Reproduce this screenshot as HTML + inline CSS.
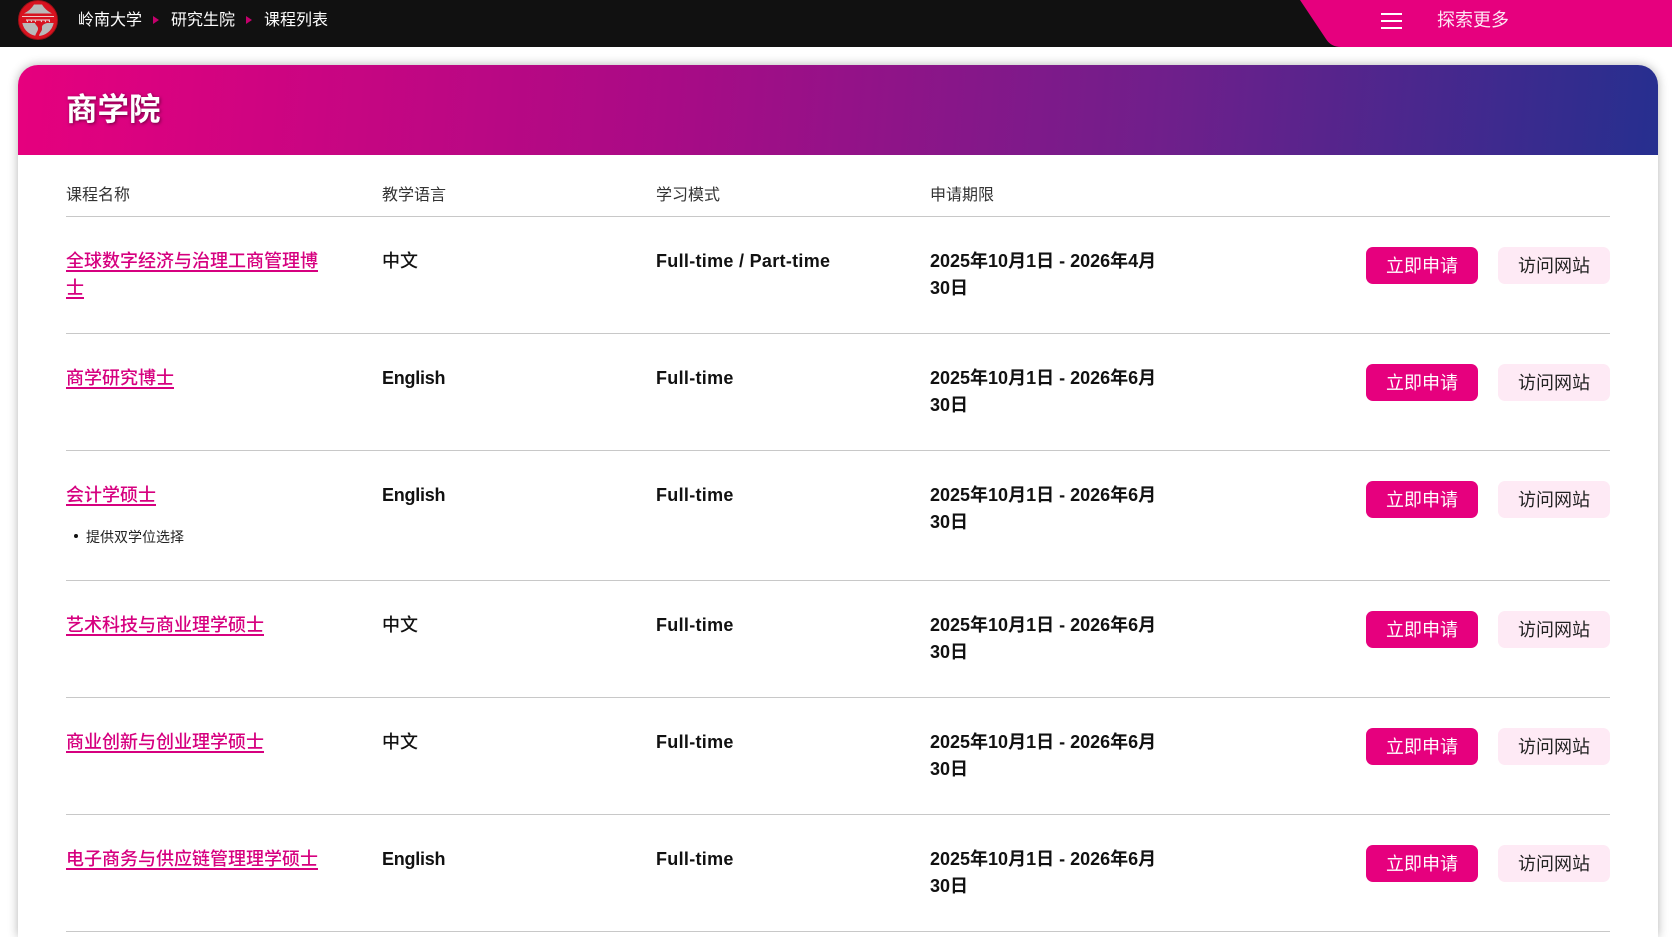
<!DOCTYPE html>
<html lang="zh">
<head>
<meta charset="utf-8">
<title>商学院</title>
<style>
*{box-sizing:border-box}
html,body{margin:0;padding:0;width:1672px;height:937px;overflow:hidden;background:#fff;
font-family:"Liberation Sans","Noto Sans CJK SC",sans-serif;color:#111}
.t{position:absolute;white-space:nowrap}
#bar{position:absolute;left:0;top:0;width:1672px;height:47px;background:#111}
.crumb{position:absolute;top:9px;font-size:16px;line-height:24px;color:#fff;white-space:nowrap}
.arr{position:absolute;top:16px;width:0;height:0;border-left:6px solid #c4006c;border-top:4.5px solid transparent;border-bottom:4.5px solid transparent}
#card{position:absolute;left:18px;top:65px;width:1640px;height:872px;background:#fff;border-radius:20px 20px 0 0;box-shadow:0 0 10px rgba(0,0,0,.3)}
#head{position:absolute;left:18px;top:65px;width:1640px;height:90px;border-radius:20px 20px 0 0;
background:linear-gradient(95deg,#e6007e 0%,#a80b86 40%,#6f1f8b 70%,#262f8f 100%)}
#title{position:absolute;left:66px;top:89px;font-size:31.500px;line-height:40px;font-weight:bold;color:#fff;text-shadow:1px 1px 3px rgba(0,0,0,.5);white-space:nowrap}
.th{position:absolute;top:184px;font-size:16px;line-height:24px;color:#333;white-space:nowrap}
.ln{position:absolute;left:66px;width:1544px;height:1px;background:#c8c8c8}
.link{position:absolute;left:66px;font-size:18px;line-height:28px;white-space:nowrap;color:#d6007f;font-weight:500;text-decoration:underline;text-decoration-thickness:2px;text-underline-offset:3px}
.c{position:absolute;font-size:18px;line-height:27px;font-weight:bold;white-space:nowrap;color:#111}
.zh{font-weight:500}
.en{letter-spacing:-.25px}
.m{letter-spacing:.3px}
.b1,.b2{position:absolute;width:112px;height:37px;border-radius:7px;font-size:18px;line-height:38px;text-align:center;white-space:nowrap}
.b1{left:1366px;background:#e6007e;color:#fff}
.b2{left:1498px;background:#feeaf5;color:#222}
.note{position:absolute;left:86px;font-size:14px;line-height:20px;color:#222;white-space:nowrap}
.dot{position:absolute;left:74px;width:4px;height:4px;border-radius:50%;background:#111}
</style>
</head>
<body>
<div id="bar"></div>
<svg style="position:absolute;left:18px;top:0" width="40" height="40" viewBox="0 0 40 40">
<circle cx="20" cy="20" r="19.500" fill="#d8121f"/>
<circle cx="20" cy="20" r="19.500" fill="none" stroke="#9c1016" stroke-width="1"/>
<path d="M16 4.500 H24 C26 8 30 11.500 34 13.500 L6 13.500 C10 11.500 14 8 16 4.500Z" fill="#b9b9b9"/>
<rect x="4" y="16" width="32" height="1" fill="#f0c8c8"/>
<path d="M4.300 23 H35.700 A16 16 0 0 1 4.300 23Z" fill="#b9b9b9"/>
<path d="M8 20h24" stroke="#e8dede" stroke-width="1" fill="none"/>
<path d="M9 20.500l.7 1.500M13 20.500l.7 1.500M17 20.500l.7 1.500M23 20.500l.7 1.500M27 20.500l.7 1.500M31 20.500l.7 1.500" stroke="#e8dede" stroke-width="1" fill="none"/>
<path d="M17 23 H29 C26 24 23.500 25 24 28 C24.500 32 20.500 33 21 37 L17 37 C17.500 33 20.500 31 20 28 C19.500 26 17.500 25 17 23Z" fill="#d8121f"/>
</svg>
<div class="crumb" style="left:78px">岭南大学</div>
<div class="arr" style="left:153px"></div>
<div class="crumb" style="left:171px">研究生院</div>
<div class="arr" style="left:246px"></div>
<div class="crumb" style="left:264px">课程列表</div>

<svg style="position:absolute;left:1295px;top:0" width="377" height="47" viewBox="0 0 377 47">
<path d="M5 0 L31 39 Q36 47 46 47 L377 47 L377 0Z" fill="#e6007e"/>
<rect x="86" y="13" width="21" height="2" fill="#fff"/>
<rect x="86" y="20" width="21" height="2" fill="#fff"/>
<rect x="86" y="27" width="21" height="2" fill="#fff"/>
</svg>
<div class="t" style="left:1437px;top:8px;font-size:18px;line-height:24px;color:#fde6f3">探索更多</div>

<div id="card"></div>
<div id="head"></div>
<div id="title">商学院</div>

<div class="th" style="left:66px">课程名称</div>
<div class="th" style="left:382px">教学语言</div>
<div class="th" style="left:656px">学习模式</div>
<div class="th" style="left:930px">申请期限</div>
<div class="ln" style="top:216px"></div>

<!-- Row 1 -->
<div class="link" style="top:247px">全球数字经济与治理工商管理博</div>
<div class="link" style="top:274px">士</div>
<div class="c zh" style="left:382px;top:248px">中文</div>
<div class="c m" style="left:656px;top:248px">Full-time / Part-time</div>
<div class="c" style="left:930px;top:248px">2025年10月1日 - 2026年4月<br>30日</div>
<div class="b1" style="top:247px">立即申请</div><div class="b2" style="top:247px">访问网站</div>
<div class="ln" style="top:333px"></div>

<!-- Row 2 -->
<div class="link" style="top:364px">商学研究博士</div>
<div class="c en" style="left:382px;top:365px">English</div>
<div class="c m" style="left:656px;top:365px">Full-time</div>
<div class="c" style="left:930px;top:365px">2025年10月1日 - 2026年6月<br>30日</div>
<div class="b1" style="top:364px">立即申请</div><div class="b2" style="top:364px">访问网站</div>
<div class="ln" style="top:450px"></div>

<!-- Row 3 -->
<div class="link" style="top:481px">会计学硕士</div>
<div class="c en" style="left:382px;top:482px">English</div>
<div class="c m" style="left:656px;top:482px">Full-time</div>
<div class="c" style="left:930px;top:482px">2025年10月1日 - 2026年6月<br>30日</div>
<div class="b1" style="top:481px">立即申请</div><div class="b2" style="top:481px">访问网站</div>
<div class="dot" style="top:534px"></div>
<div class="note" style="top:527px">提供双学位选择</div>
<div class="ln" style="top:580px"></div>

<!-- Row 4 -->
<div class="link" style="top:611px">艺术科技与商业理学硕士</div>
<div class="c zh" style="left:382px;top:612px">中文</div>
<div class="c m" style="left:656px;top:612px">Full-time</div>
<div class="c" style="left:930px;top:612px">2025年10月1日 - 2026年6月<br>30日</div>
<div class="b1" style="top:611px">立即申请</div><div class="b2" style="top:611px">访问网站</div>
<div class="ln" style="top:697px"></div>

<!-- Row 5 -->
<div class="link" style="top:728px">商业创新与创业理学硕士</div>
<div class="c zh" style="left:382px;top:729px">中文</div>
<div class="c m" style="left:656px;top:729px">Full-time</div>
<div class="c" style="left:930px;top:729px">2025年10月1日 - 2026年6月<br>30日</div>
<div class="b1" style="top:728px">立即申请</div><div class="b2" style="top:728px">访问网站</div>
<div class="ln" style="top:814px"></div>

<!-- Row 6 -->
<div class="link" style="top:845px">电子商务与供应链管理理学硕士</div>
<div class="c en" style="left:382px;top:846px">English</div>
<div class="c m" style="left:656px;top:846px">Full-time</div>
<div class="c" style="left:930px;top:846px">2025年10月1日 - 2026年6月<br>30日</div>
<div class="b1" style="top:845px">立即申请</div><div class="b2" style="top:845px">访问网站</div>
<div class="ln" style="top:931px"></div>
</body>
</html>
